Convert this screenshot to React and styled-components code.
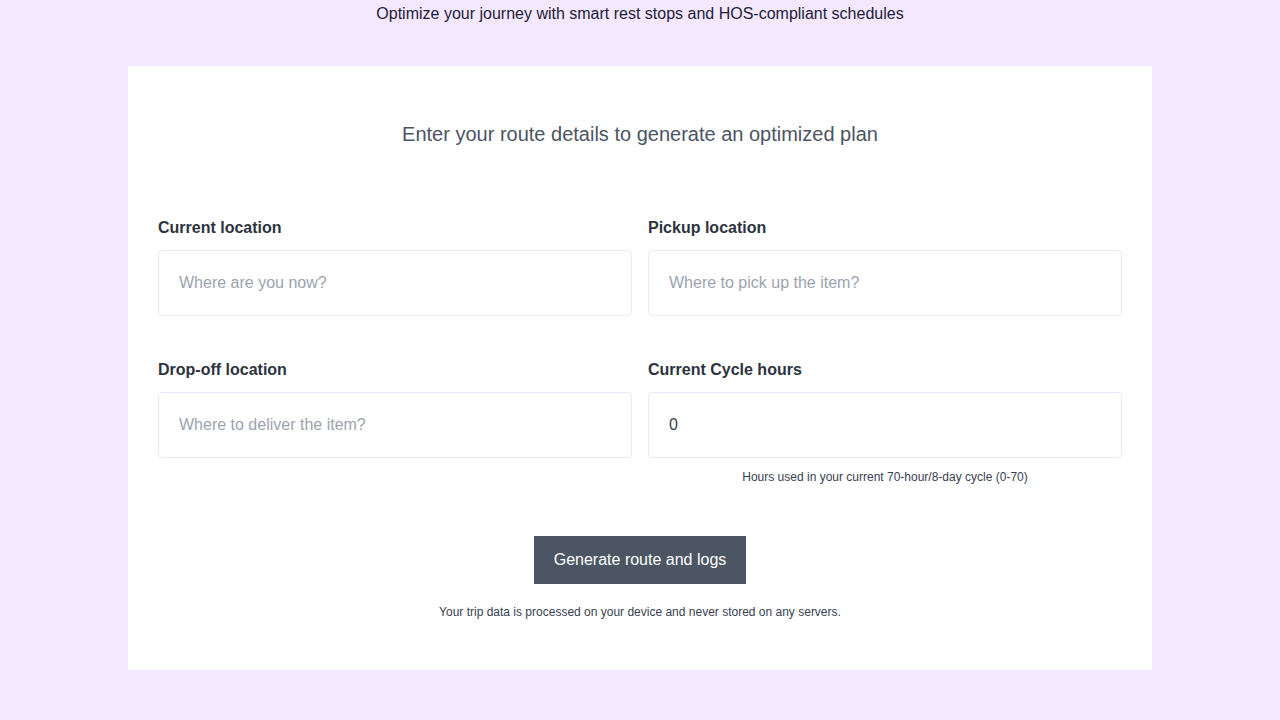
import React, { useState } from "react";
import styled, { createGlobalStyle } from "styled-components";

const GlobalStyle = createGlobalStyle`
    html, body {
        margin: 0;
        padding: 0;
        background-color: #f3e8fd;
        font-family: "Liberation Sans", Arial, sans-serif;
    }
`;

const Page = styled.div`
    min-height: 720px;
    display: flex;
    flex-direction: column;
    align-items: center;
    padding-top: 5px;
    box-sizing: border-box;
`;

const Tagline = styled.p`
    margin: 0;
    font-size: 16px;
    line-height: 18px;
    color: #1e1b3a;
`;

const Card = styled.form`
    width: 1024px;
    box-sizing: border-box;
    margin-top: 43px;
    background-color: #ffffff;
    padding: 56px 30px 51px;
    display: flex;
    flex-direction: column;
    align-items: center;
`;

const Heading = styled.h2`
    margin: 0;
    font-size: 20px;
    line-height: 24px;
    font-weight: 400;
    color: #4b5563;
`;

const Fields = styled.div`
    width: 100%;
    margin-top: 73px;
    display: grid;
    grid-template-columns: 1fr 1fr;
    column-gap: 16px;
    row-gap: 45px;
`;

const Field = styled.div`
    display: flex;
    flex-direction: column;
`;

const Label = styled.label`
    font-size: 16px;
    line-height: 18px;
    font-weight: 700;
    color: #2d3340;
    margin-bottom: 13px;
`;

const Input = styled.input`
    height: 66px;
    box-sizing: border-box;
    border: 1px solid #efe6fc;
    border-radius: 4px;
    padding: 0 20px;
    font-family: "Liberation Sans", Arial, sans-serif;
    font-size: 16px;
    color: #374151;
    background: #ffffff;
    outline: none;
    &::placeholder {
        color: #9ca3af;
    }
`;

const Hint = styled.span`
    margin-top: 12px;
    font-size: 12px;
    line-height: 14px;
    color: #374151;
    text-align: center;
`;

const SubmitButton = styled.button`
    margin-top: 52px;
    width: 212px;
    height: 48px;
    border: none;
    border-radius: 0;
    background-color: #4b5563;
    color: #ffffff;
    font-family: "Liberation Sans", Arial, sans-serif;
    font-size: 16px;
    cursor: pointer;
`;

const Privacy = styled.p`
    margin: 21px 0 0;
    font-size: 12px;
    line-height: 14px;
    color: #374151;
`;

function App() {
    const [cycleHours, setCycleHours] = useState("0");
    return (
        <>
            <GlobalStyle />
            <Page>
                <Tagline>Optimize your journey with smart rest stops and HOS-compliant schedules</Tagline>
                <Card onSubmit={e => e.preventDefault()}>
                    <Heading>Enter your route details to generate an optimized plan</Heading>
                    <Fields>
                        <Field>
                            <Label htmlFor="current">Current location</Label>
                            <Input id="current" placeholder="Where are you now?" />
                        </Field>
                        <Field>
                            <Label htmlFor="pickup">Pickup location</Label>
                            <Input id="pickup" placeholder="Where to pick up the item?" />
                        </Field>
                        <Field>
                            <Label htmlFor="dropoff">Drop-off location</Label>
                            <Input id="dropoff" placeholder="Where to deliver the item?" />
                        </Field>
                        <Field>
                            <Label htmlFor="cycle">Current Cycle hours</Label>
                            <Input
                                id="cycle"
                                value={cycleHours}
                                onChange={e => setCycleHours(e.target.value)}
                            />
                            <Hint>Hours used in your current 70-hour/8-day cycle (0-70)</Hint>
                        </Field>
                    </Fields>
                    <SubmitButton type="submit">Generate route and logs</SubmitButton>
                    <Privacy>Your trip data is processed on your device and never stored on any servers.</Privacy>
                </Card>
            </Page>
        </>
    );
};

export default App;
